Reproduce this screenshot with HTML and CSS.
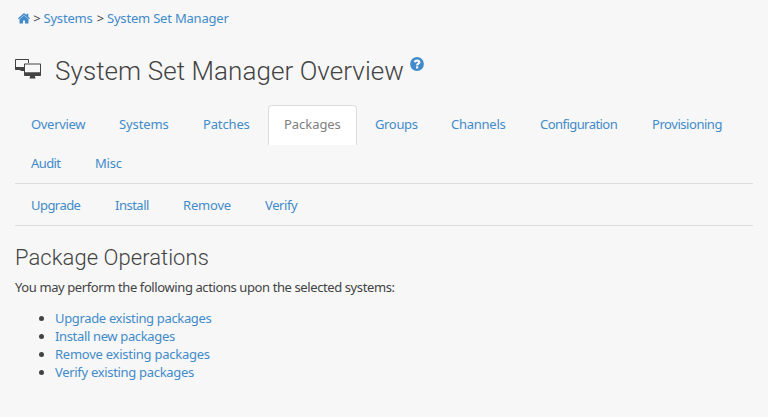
FILE: index.html
```html
<!DOCTYPE html>
<html lang="en">
<head>
<meta charset="utf-8">
<title>System Set Manager</title>
<link rel="stylesheet" href="styles.css">
</head>
<body>
<nav class="breadcrumb">
<a class="home" href="#" aria-label="Home"><svg width="12" height="11" viewBox="0 0 12 11"><path fill="currentColor" d="M6 0 0 5.200l.9 1L6 1.900l5.100 4.300.9-1-1.700-1.500V.7H8.500v1.400zM6 2.500 1.500 6.300V10q0 .6.6.6H5V7.500h2v3.100h2.900q.6 0 .6-.6V6.300z"/></svg></a><span class="sep">&gt;</span><a class="crumb-systems" href="#">Systems</a><span class="sep">&gt;</span><a class="crumb-manager" href="#">System Set Manager</a>
</nav>
<h1><svg class="monitors" width="26" height="20" viewBox="0 0 26 20"><path fill="#434343" fill-rule="evenodd" d="M.8 0h12.400q.8 0 .8.800V4h-1V1H1v7h8V12H5.500v-1H.8Q0 11 0 10.200V.8Q0 0 .8 0z"/><path fill="#434343" fill-rule="evenodd" d="M9.800 4.500h15.400q.8 0 .8.800v11q0 .8-.8.800H20v1.400h.5v1h-6v-1h.5v-1.400H9.800q-.8 0-.8-.8v-11q0-.8.8-.8zM10 5.500V13.200h15V5.500z"/></svg><span class="title">System Set Manager Overview</span><a class="help" href="#" aria-label="Help"><svg width="14" height="14" viewBox="0 0 14 14"><circle cx="7" cy="7" r="6.900" fill="currentColor"/><path d="M4.700 5.200C5.100 3.200 9.300 3.200 9.300 5.300 9.300 6.700 7.100 6.700 7.100 8.500" fill="none" stroke="#f7f7f7" stroke-width="2.200"/><path d="M6 9.300h2.200v2.200H6z" fill="#f7f7f7"/></svg></a></h1>
<ul class="tabs">
<li class="overview"><a href="#">Overview</a></li>
<li class="systems"><a href="#">Systems</a></li>
<li class="patches"><a href="#">Patches</a></li>
<li class="active"><a href="#">Packages</a></li>
<li class="groups"><a href="#">Groups</a></li>
<li class="channels"><a href="#">Channels</a></li>
<li class="configuration"><a href="#">Configuration</a></li>
<li class="provisioning"><a href="#">Provisioning</a></li>
<li class="audit"><a href="#">Audit</a></li>
<li class="misc"><a href="#">Misc</a></li>
</ul>
<ul class="tabs subtabs">
<li class="upgrade"><a href="#">Upgrade</a></li>
<li class="install"><a href="#">Install</a></li>
<li class="remove"><a href="#">Remove</a></li>
<li class="verify"><a href="#">Verify</a></li>
</ul>
<h2>Package Operations</h2>
<p>You may perform the following actions upon the selected systems:</p>
<ul class="actions">
<li class="do-upgrade"><a href="#">Upgrade existing packages</a></li>
<li class="do-install"><a href="#">Install new packages</a></li>
<li class="do-remove"><a href="#">Remove existing packages</a></li>
<li class="do-verify"><a href="#">Verify existing packages</a></li>
</ul>
</body>
</html>
```
FILE: styles.css
```css
* { box-sizing: border-box; }
body {
  margin: 0;
  padding: 0 15px;
  background: #f7f7f7;
  color: #434343;
  font: 13px/18px "Noto Sans", sans-serif;
  letter-spacing: -0.2px;
}
a { color: #428bca; text-decoration: none; white-space: nowrap; }
.breadcrumb { display: flex; height: 38px; padding: 9px 0 0 3px; }
.home { display: flex; width: 12px; padding-top: 4px; }
.sep { width: 13.500px; text-align: center; }
.crumb-systems { width: 50px; }
h1, h2 { margin: 0; font-family: Roboto, sans-serif; font-weight: 300; }
h1 { display: flex; align-items: flex-start; height: 67px; padding-top: 18px; font-size: 26px; line-height: 30px; letter-spacing: 0.07px; }
.monitors { margin: 3px 14px 0 0; }
.title { width: 355px; white-space: nowrap; }
.help { display: flex; margin-top: 1px; }
ul { margin: 0; padding: 0; }
.tabs { display: flex; flex-wrap: wrap; list-style: none; border-bottom: 1px solid #ddd; }
.tabs li { box-sizing: content-box; height: 39px; padding: 0 16px; margin-right: 2px; }
.tabs a { display: block; padding-top: 10px; }
.tabs .active {
  box-sizing: border-box;
  width: 89px;
  height: 40px;
  margin-bottom: -1px;
  padding: 0 15px;
  border: 1px solid #ddd;
  border-bottom: 0;
  border-radius: 4px 4px 0 0;
  background: #fff;
  letter-spacing: -0.05px;
}
.tabs .active a { color: #808080; padding-top: 9px; }
.subtabs { margin-top: 2px; }
.overview { width: 54px; letter-spacing: -0.32px; }
.systems { width: 50px; letter-spacing: -0.1px; }
.patches { width: 47px; letter-spacing: -0.15px; }
.groups { width: 42px; letter-spacing: -0.35px; }
.channels { width: 55px; letter-spacing: -0.25px; }
.configuration { width: 78px; letter-spacing: -0.55px; }
.provisioning { width: 71px; letter-spacing: -0.45px; }
.audit { width: 30px; letter-spacing: -0.6px; }
.misc { width: 27px; }
.upgrade { width: 50px; letter-spacing: -0.55px; }
.install { width: 34px; letter-spacing: -0.5px; }
.remove { width: 48px; }
.verify { width: 33px; letter-spacing: -0.4px; }
h2 { height: 52px; padding-top: 18px; font-size: 22px; line-height: 28px; letter-spacing: 0.05px; }
p { margin: 0 0 13px; height: 18px; letter-spacing: -0.4px; }
.actions { padding-left: 40px; }
.actions li { height: 18px; }
.do-upgrade { letter-spacing: -0.34px; }
.do-install { letter-spacing: -0.35px; }
.do-remove { letter-spacing: -0.25px; }
.do-verify { letter-spacing: -0.31px; }
```
